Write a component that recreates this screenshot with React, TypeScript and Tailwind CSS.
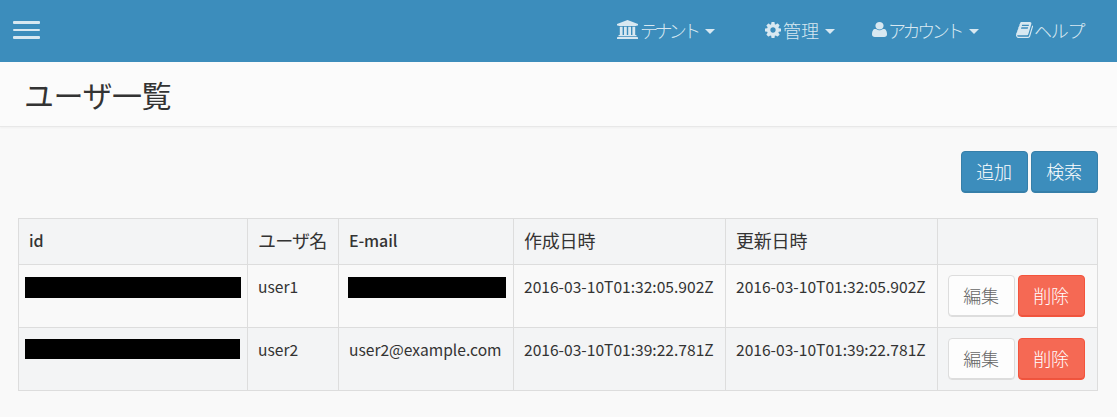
import type { ReactNode } from "react";

const BankIcon = () => (
  <svg viewBox="-128 0 1920 1792" className="h-[19px] w-[21px] shrink-0" fill="currentColor" preserveAspectRatio="none">
    <path d="M832 0l960 384v128h-128q0 26-20.5 45t-48.5 19h-1526q-28 0-48.5-19t-20.5-45h-128v-128zm-704 640h256v768h128v-768h256v768h128v-768h256v768h128v-768h256v768h59q28 0 48.5 19t20.5 45v64h-1664v-64q0-26 20.5-45t48.5-19h59v-768zm1595 960q28 0 48.5 19t20.5 45v128h-1920v-128q0-26 20.5-45t48.5-19h1782z" />
  </svg>
);

const CogIcon = () => (
  <svg viewBox="128 128 1536 1536" className="h-4 w-4 shrink-0" fill="currentColor">
    <path d="M1152 896q0-106-75-181t-181-75-181 75-75 181 75 181 181 75 181-75 75-181zm512-109v222q0 12-8 23t-20 13l-185 28q-19 54-39 91 35 50 107 138 10 12 10 25t-9 23q-27 37-99 108t-94 71q-12 0-26-9l-138-108q-44 23-91 38-16 136-29 186-7 28-36 28h-222q-14 0-24.5-8.5t-11.5-21.5l-28-184q-49-16-90-37l-141 107q-10 9-25 9-14 0-25-11-126-114-165-168-7-10-7-23 0-12 8-23 15-21 51-66.5t54-70.5q-27-50-41-99l-183-27q-13-2-21-12.5t-8-23.5v-222q0-12 8-23t19-13l186-28q14-46 39-92-40-57-107-138-10-12-10-24 0-10 9-23 26-36 98.5-107.5t94.5-71.5q13 0 26 10l138 107q44-23 91-38 16-136 29-186 7-28 36-28h222q14 0 24.5 8.5t11.5 21.5l28 184q49 16 90 37l142-107q9-9 24-9 13 0 25 10 129 119 165 170 7 8 7 22 0 12-8 23-15 21-51 66.5t-54 70.5q26 50 41 98l183 28q13 2 21 12.5t8 23.5z" />
  </svg>
);

const UserIcon = () => (
  <svg viewBox="192 128 1408 1536" className="h-[15px] w-[15px] shrink-0" fill="currentColor" preserveAspectRatio="none">
    <path d="M1600 1405q0 120-73 189.5t-194 69.5h-874q-121 0-194-69.5t-73-189.5q0-53 3.5-103.5t14-109 26.5-108.5 43-97.5 62-81 85.5-53.5 111.5-20q9 0 42 21.5t74.5 48 108 48 133.5 21.5 133.5-21.5 108-48 74.5-48 42-21.5q61 0 111.5 20t85.5 53.5 62 81 43 97.5 26.5 108.5 14 109 3.5 103.5zm-320-893q0 159-112.5 271.5t-271.5 112.5-271.5-112.5-112.5-271.5 112.5-271.5 271.5-112.5 271.5 112.5 112.5 271.5z" />
  </svg>
);

const BookIcon = () => (
  <svg viewBox="64 128 1664 1536" className="h-4 w-[17px] shrink-0" fill="currentColor" preserveAspectRatio="none">
    <path d="M1703 478q40 57 18 129l-275 906q-19 64-76.5 107.5t-122.5 43.5h-923q-77 0-148.5-53.5t-99.5-131.5q-24-67-2-127 0-4 3-27t4-37q1-8-3-21.5t-3-19.5q2-11 8-21t16.5-23.5 16.5-23.5q23-38 45-91.5t30-91.5q3-10 .5-30t-.5-28q3-11 17-28t17-23q21-36 42-92t25-90q1-9-2.5-32t.5-28q4-13 22-30.5t22-22.5q19-26 42.5-84.5t27.5-96.5q1-8-3-25.5t-2-26.5q2-8 9-18t18-23 17-21q8-12 16.5-30.5t15-35 16-36 19.5-32 26.5-23.5 36-11.5 47.5 5.5l-1 3q38-9 51-9h761q74 0 114 56t18 130l-274 906q-36 119-71.5 153.5t-128.5 34.5h-869q-27 0-38 15-11 16-1 43 24 70 144 70h923q29 0 56-15.5t35-41.5l300-987q7-22 5-57 38 15 59 43zm-1064 2q-4 13 2 22.5t20 9.5h608q13 0 25.5-9.5t16.5-22.5l21-64q4-13-2-22.5t-20-9.5h-608q-13 0-25.5 9.5t-16.5 22.5zm-83 256q-4 13 2 22.5t20 9.5h608q13 0 25.5-9.5t16.5-22.5l21-64q4-13-2-22.5t-20-9.5h-608q-13 0-25.5 9.5t-16.5 22.5z" />
  </svg>
);

const Caret = () => (
  <span className="mt-[4px] h-0 w-0 shrink-0 border-x-[5px] border-t-[5px] border-x-transparent border-t-[#d8e8f1]" />
);

function NavItem({ icon, label, caret, className }: { icon: ReactNode; label: ReactNode; caret?: boolean; className: string }) {
  return (
    <a className={`flex h-full shrink-0 items-center whitespace-nowrap ${className}`}>
      {icon}
      {label}
      {caret && <Caret />}
    </a>
  );
}

const buttonStyles = {
  primary: "border-[#367fa9] bg-[#3c8dbc] text-white shadow-[inset_0_-1px_0_#367fa9]",
  default: "border-[#dddddd] bg-[#fdfdfd] text-[#666666] shadow-[inset_0_-1px_0_#dddddd]",
  danger: "border-[#f4543c] bg-[#f56954] text-white shadow-[inset_0_-1px_0_#ec543e]",
};

function Button({ kind, children }: { kind: keyof typeof buttonStyles; children: ReactNode }) {
  return (
    <button className={`flex h-[42px] w-[67px] items-center justify-center rounded-[4px] border pr-px pb-[3px] text-[18px] font-light leading-none tracking-[-0.2px] ${buttonStyles[kind]}`}>
      {children}
    </button>
  );
}

const cell = "border-r border-b border-[#dddddd] align-top text-left";

function Th({ children, className = "text-[16px] font-medium tracking-[-0.1px]" }: { children?: ReactNode; className?: string }) {
  return <th className={`${cell} h-[46px] pl-[10px] pt-[9px] leading-6 whitespace-nowrap ${className}`}>{children}</th>;
}

function Td({ children, className = "pl-[10px] pt-[9px]" }: { children?: ReactNode; className?: string }) {
  return <td className={`${cell} h-[63px] text-[15.6px] leading-6 whitespace-nowrap ${className}`}>{children}</td>;
}

function Actions() {
  return (
    <div className="flex gap-[3px]">
      <Button kind="default">編集</Button>
      <Button kind="danger">削除</Button>
    </div>
  );
}

export default function App() {
  return (
    <div className="h-[417px] w-[1117px] overflow-hidden bg-[#f9f9f9] font-['Noto_Sans_CJK_JP',sans-serif] text-[#333333]">
      <header className="flex h-[62px] items-start bg-[#3c8dbc] text-[#d8e8f1]">
        <button className="mt-[21px] ml-[13px] mr-auto flex h-[18px] w-[27px] flex-col justify-between" aria-label="Menu">
          <span className="h-[3px] w-full rounded-[1px] bg-current" />
          <span className="h-[2px] w-full rounded-[1px] bg-current" />
          <span className="h-[3px] w-full rounded-[1px] bg-current" />
        </button>
        <nav className="mr-[33px] flex h-[59px] items-center text-[18px] font-light leading-none">
          <NavItem className="w-[148px]" icon={<BankIcon />} label={<span className="w-[67px] pl-[2px] tracking-[-3.6px]">テナント</span>} caret />
          <NavItem className="w-[107px]" icon={<CogIcon />} label={<span className="w-[44px] pl-[2px]">管理</span>} caret />
          <NavItem className="w-[144px]" icon={<UserIcon />} label={<span className="w-[82px] pl-[1px] tracking-[-3.4px]">アカウント</span>} caret />
          <NavItem className="w-[68px]" icon={<BookIcon />} label={<span className="pl-px tracking-[-1.2px]">ヘルプ</span>} />
        </nav>
      </header>
      <section className="flex h-[65px] items-center border-b border-[#e8e8e8] bg-[#fbfbfb] pl-[24px] shadow-[0_1px_2px_rgba(0,0,0,0.04)]">
        <h1 className="text-[30px] leading-none tracking-[-0.5px]">ユーザ一覧</h1>
      </section>
      <main className="px-[18px] pt-[24px]">
        <div className="mr-px flex justify-end gap-[3px]">
          <Button kind="primary">追加</Button>
          <Button kind="primary">検索</Button>
        </div>
        <table className="mt-[25px] w-[1080px] table-fixed border-separate border-spacing-0 border-t border-l border-[#dddddd]">
          <colgroup>
            <col className="w-[229px]" />
            <col className="w-[91px]" />
            <col className="w-[175px]" />
            <col className="w-[212px]" />
            <col className="w-[212px]" />
            <col className="w-[160px]" />
          </colgroup>
          <thead>
            <tr className="bg-[#f3f4f5]">
              <Th>id</Th>
              <Th className="text-[18px] font-normal tracking-[-0.8px]">ユーザ名</Th>
              <Th>E-mail</Th>
              <Th className="text-[18px] font-normal tracking-[-0.2px]">作成日時</Th>
              <Th className="text-[18px] font-normal tracking-[-0.2px]">更新日時</Th>
              <Th />
            </tr>
          </thead>
          <tbody>
            <tr>
              <Td className="pl-[6px] pt-[12px]"><div className="h-[21px] w-[216px] bg-black" /></Td>
              <Td>user1</Td>
              <Td className="pl-[9px] pt-[12px]"><div className="h-[21px] w-[158px] bg-black" /></Td>
              <Td>2016-03-10T01:32:05.902Z</Td>
              <Td>2016-03-10T01:32:05.902Z</Td>
              <Td className="pl-[10px] pt-[10px]"><Actions /></Td>
            </tr>
            <tr className="bg-[#f3f4f5]">
              <Td className="pl-[6px] pt-[11px]"><div className="h-[20px] w-[215px] bg-black" /></Td>
              <Td>user2</Td>
              <Td>user2@example.com</Td>
              <Td>2016-03-10T01:39:22.781Z</Td>
              <Td>2016-03-10T01:39:22.781Z</Td>
              <Td className="pl-[10px] pt-[10px]"><Actions /></Td>
            </tr>
          </tbody>
        </table>
      </main>
    </div>
  );
}
